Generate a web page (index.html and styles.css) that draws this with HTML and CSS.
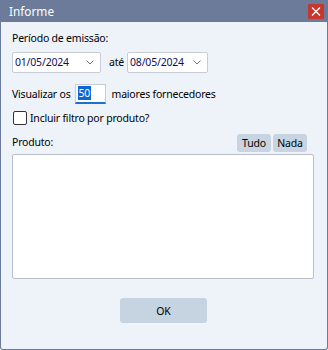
FILE: index.html
```html
<!DOCTYPE html>
<html>
<head>
<meta charset="utf-8">
<link rel="stylesheet" href="styles.css">
</head>
<body>
<div class="window">
  <div class="titlebar">
    <span class="title">Informe</span>
    <span class="close"><svg width="16" height="15" viewBox="0 0 16 15"><path d="M4 3.5 L12 11.5 M12 3.5 L4 11.5" stroke="#fff" stroke-width="1.3"/></svg></span>
  </div>
  <div class="content">
    <div class="label first">Período de emissão:</div>
    <div class="daterow">
      <div class="combo c1"><span class="val">01/05/2024</span><svg class="chev" width="8" height="5" viewBox="0 0 8 5"><path d="M0.5 0.5 L4 4 L7.5 0.5" fill="none" stroke="#777" stroke-width="1"/></svg></div>
      <span class="ate">até</span>
      <div class="combo c2"><span class="val">08/05/2024</span><svg class="chev" width="8" height="5" viewBox="0 0 8 5"><path d="M0.5 0.5 L4 4 L7.5 0.5" fill="none" stroke="#777" stroke-width="1"/></svg></div>
    </div>
    <div class="visrow">
      <span>Visualizar os</span>
      <div class="numbox"><span class="sel">50</span></div>
      <span>maiores fornecedores</span>
    </div>
    <div class="checkrow">
      <span class="check"></span>
      <span>Incluir filtro por produto?</span>
    </div>
    <div class="prodhead">
      <span>Produto:</span>
      <div class="btns"><span class="sbtn">Tudo</span><span class="sbtn">Nada</span></div>
    </div>
    <div class="listbox"></div>
    <div class="okrow"><span class="ok">OK</span></div>
  </div>
</div>
</body>
</html>
```
FILE: styles.css
```css
html, body { margin: 0; padding: 0; }
body { width: 328px; height: 350px; background: #fff; font-family: "Noto Sans", "Open Sans", sans-serif; font-size: 10.5px; letter-spacing: -0.2px; color: #000; }
.window { width: 328px; height: 350px; box-sizing: border-box; display: flex; flex-direction: column; border: 1px solid #6b7b99; border-top: none; border-radius: 0 0 3px 3px; background: #eef3fa; overflow: hidden; }
.titlebar { height: 22px; background: #6b7b99; display: flex; align-items: center; justify-content: space-between; margin: 0 -1px; padding: 0 4px 0 9px; flex: none; }
.title { color: #fff; font-size: 11.8px; letter-spacing: 0; line-height: 22px; }
.close { width: 16px; height: 15px; background: #c8372d; border-radius: 1px; display: flex; margin-top: 1px; }
.content { flex: 1; padding: 0 13px 0 11px; display: flex; flex-direction: column; }
.label.first { margin-top: 9px; line-height: 15px; }
.daterow { display: flex; align-items: center; margin-top: 5px; height: 22px; }
.combo { height: 21px; box-sizing: border-box; background: #fff; border: 1px solid #c7ccd5; border-radius: 2px; display: flex; align-items: center; justify-content: space-between; padding: 0 6px 0 2px; color: #10105a; }
.c1 { width: 89px; }
.c2 { width: 81px; }
.ate { margin: 0 3px 0 8px; }
.visrow { display: flex; align-items: center; margin-top: 10px; height: 21px; }
.numbox { width: 31px; height: 20px; box-sizing: border-box; background: #fff; border: 1px solid #c7ccd5; border-bottom: 2px solid #1f6fd0; margin: 0 6px 0 4px; display: flex; align-items: center; padding-left: 2px; }
.sel { background: #0b67d2; color: #fff; line-height: 14px; padding: 0 1px; }
.checkrow { display: flex; align-items: center; margin-top: 5px; height: 18px; }
.check { width: 12px; height: 12px; border: 1px solid #333; border-radius: 2px; background: #fff; margin: 0 3px 0 1px; }
.prodhead { display: flex; justify-content: space-between; align-items: flex-end; margin-top: 7px; height: 18px; }
.prodhead > span { align-self: flex-start; line-height: 16px; }
.btns { display: flex; gap: 2px; margin-right: 7px; }
.sbtn { width: 34px; text-align: center; background: #c8d4e1; border-radius: 3px; line-height: 18px; }
.listbox { margin-top: 2px; height: 125px; box-sizing: border-box; background: #fff; border: 1px solid #b9c0cc; border-radius: 2px; }
.okrow { display: flex; justify-content: center; margin-top: 19px; }
.ok { width: 87px; height: 25px; background: #c6d4e1; border-radius: 3px; display: flex; align-items: center; justify-content: center; margin-left: 1px; }
```
